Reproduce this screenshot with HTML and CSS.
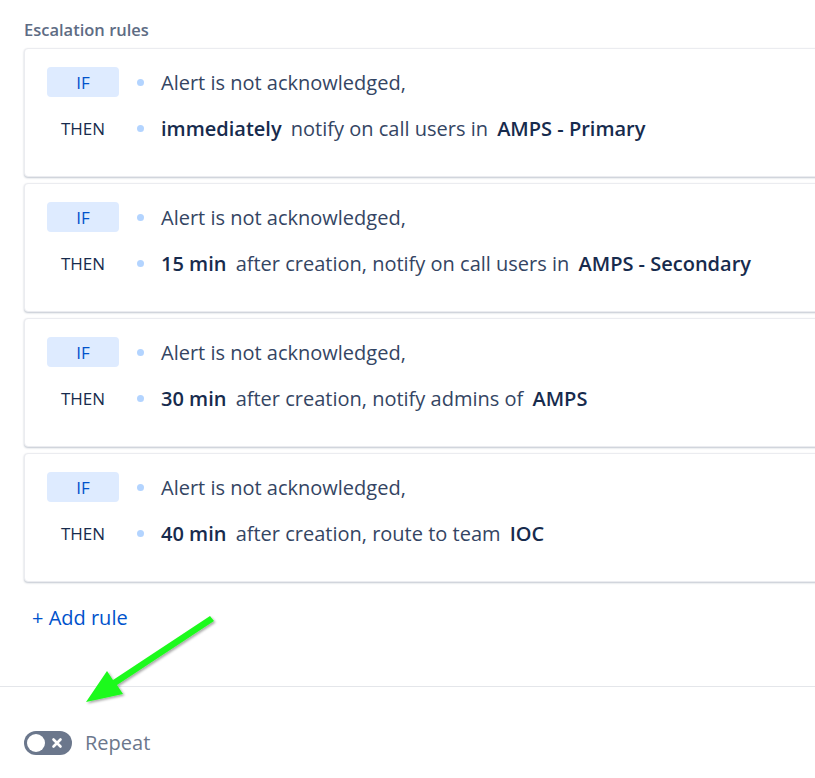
FILE: index.html
```html
<!DOCTYPE html>
<html>
<head>
<meta charset="utf-8">
<link rel="stylesheet" href="styles.css">
</head>
<body>
<div class="page">
  <section class="rules">
    <h2 class="title">Escalation rules</h2>
    <div class="card">
      <div class="row"><span class="badge if">IF</span><span class="dot"></span><span class="txt">Alert is not acknowledged,</span></div>
      <div class="row"><span class="badge then">THEN</span><span class="dot"></span><span class="txt"><b>immediately</b> notify on call users in <b>AMPS - Primary</b></span></div>
    </div>
    <div class="card">
      <div class="row"><span class="badge if">IF</span><span class="dot"></span><span class="txt">Alert is not acknowledged,</span></div>
      <div class="row"><span class="badge then">THEN</span><span class="dot"></span><span class="txt"><b>15 min</b> after creation, notify on call users in <b>AMPS - Secondary</b></span></div>
    </div>
    <div class="card">
      <div class="row"><span class="badge if">IF</span><span class="dot"></span><span class="txt">Alert is not acknowledged,</span></div>
      <div class="row"><span class="badge then">THEN</span><span class="dot"></span><span class="txt"><b>30 min</b> after creation, notify admins of <b>AMPS</b></span></div>
    </div>
    <div class="card">
      <div class="row"><span class="badge if">IF</span><span class="dot"></span><span class="txt">Alert is not acknowledged,</span></div>
      <div class="row"><span class="badge then">THEN</span><span class="dot"></span><span class="txt"><b>40 min</b> after creation, route to team <b>IOC</b></span></div>
    </div>
    <a class="add">+ Add rule</a>
  </section>
  <footer class="footer">
    <label class="toggle-row">
      <span class="toggle"><span class="knob"></span><svg class="x" viewBox="0 0 12 12" width="12" height="12"><path d="M2.5 2.5 L9.5 9.5 M9.5 2.5 L2.5 9.5" stroke="#fff" stroke-width="2.6" stroke-linecap="round"/></svg></span>
      <span class="repeat">Repeat</span>
    </label>
  </footer>
  <svg class="arrow" width="815" height="778" viewBox="0 0 815 778">
    <defs>
      <filter id="sh" x="-20%" y="-20%" width="140%" height="140%">
        <feDropShadow dx="1.5" dy="1.5" stdDeviation="1.2" flood-color="#000" flood-opacity="0.35"/>
      </filter>
    </defs>
    <polygon filter="url(#sh)" fill="#1dfa1d" points="210,616 113,680 107,671 86,702 123,694 117,685 214,621"/>
  </svg>
</div>
</body>
</html>
```
FILE: styles.css
```css
html, body {
  margin: 0;
  padding: 0;
  background: #fff;
  overflow: hidden;
}
body {
  font-family: "Open Sans", "Noto Sans", sans-serif;
  color: #172b4d;
}
.page {
  position: relative;
  width: 815px;
  height: 778px;
  overflow: hidden;
}
.rules {
  padding: 20px 0 0 24px;
}
.title {
  margin: 0 0 8px;
  font-size: 16.5px;
  font-weight: 600;
  color: #5e6c84;
  line-height: 20px;
}
.card {
  width: 900px;
  height: 129px;
  box-sizing: border-box;
  margin-bottom: 6px;
  background: #fff;
  border-radius: 4px;
  border: 1px solid #ebecf0;
  box-shadow: 0 1px 2px rgba(9, 30, 66, 0.25);
  padding: 18px 0 0 22px;
  display: flex;
  flex-direction: column;
  gap: 16px;
}
.row {
  display: flex;
  align-items: center;
  height: 30px;
}
.badge {
  width: 72px;
  height: 30px;
  display: flex;
  align-items: center;
  justify-content: center;
  font-size: 17px;
  border-radius: 4px;
  flex: none;
}
.badge.if {
  background: #deebff;
  color: #0052cc;
}
.badge.then {
  color: #172b4d;
}
.dot {
  width: 7px;
  height: 7px;
  border-radius: 50%;
  background: #b3d4ff;
  margin: 0 17px 0 18px;
  flex: none;
}
.txt {
  font-size: 20px;
  color: #344563;
  white-space: nowrap;
}
.txt b {
  font-weight: 600;
  color: #172b4d;
  margin: 0 4px;
}
.txt b:first-child {
  margin-left: 0;
}
.add {
  display: inline-block;
  margin: 16px 0 0 8px;
  font-size: 20px;
  color: #0052cc;
  line-height: 28px;
}
.footer {
  position: absolute;
  left: 0;
  top: 686px;
  width: 815px;
  border-top: 1px solid #e4e6ea;
  padding: 42px 0 0 24px;
  box-sizing: border-box;
}
.toggle-row {
  display: flex;
  align-items: center;
  gap: 13px;
}
.toggle {
  width: 48px;
  height: 24px;
  border-radius: 12px;
  background: #6b778c;
  display: flex;
  align-items: center;
  justify-content: space-between;
  padding: 0 9px 0 3px;
  box-sizing: border-box;
}
.knob {
  width: 18px;
  height: 18px;
  border-radius: 50%;
  background: #fff;
}
.repeat {
  font-size: 20px;
  color: #6b778c;
}
.arrow {
  position: absolute;
  left: 0;
  top: 0;
  pointer-events: none;
}
```
